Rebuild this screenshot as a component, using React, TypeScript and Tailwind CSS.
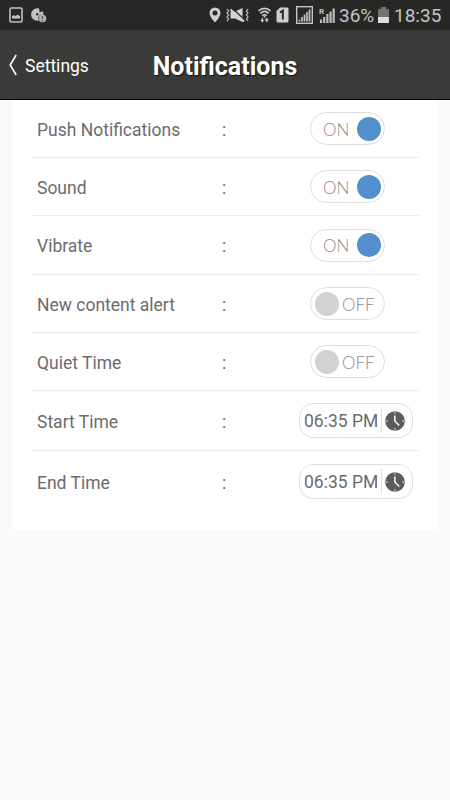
import React, { useState } from 'react';

// Status bar icons
const PictureIcon = () => (
  <svg className="w-[14px] h-[16px]" viewBox="0 0 14 16" fill="none">
    <rect x="1" y="1" width="12" height="14" rx="1.2" stroke="#bdbdbd" strokeWidth="1.6" />
    <path d="M3 11.500V9.300l2-1.300 1.500 1.200L8.800 7.400 11 9.300v2.200z" fill="#c4c4c4" />
  </svg>
);

const DiscIcon = () => (
  <svg className="w-[16px] h-[15px]" viewBox="0 0 16 15">
    <path d="M6.200.3a6.200 6.200 0 1 0 .1 12.400c.6 0 1-.1 1.500-.2A4 4 0 0 1 9.600 6.700h2.900A6.200 6.200 0 0 0 11.500 3.200L8.600 4.600 8.100.5z" fill="#c4c4c4" />
    <circle cx="6.200" cy="6.200" r="1.200" fill="#272826" />
    <circle cx="11.500" cy="10.500" r="3.800" fill="#b2b2b1" />
    <path d="M11.500 8v3M11.500 12v1" stroke="#555" strokeWidth="1.200" />
  </svg>
);

const PinIcon = () => (
  <svg className="w-[12px] h-[16px]" viewBox="0 0 12 16">
    <path
      d="M6 .5A5.500 5.500 0 0 0 .5 6c0 3.800 5.500 9.500 5.500 9.500S11.500 9.800 11.500 6A5.500 5.500 0 0 0 6 .5zm0 3a2.500 2.500 0 1 1 0 5 2.500 2.500 0 0 1 0-5z"
      fill="#cfcfcf"
    />
  </svg>
);

const VibrateMuteIcon = () => (
  <svg className="w-[23px] h-[16px]" viewBox="0 0 23 16" fill="none">
    <path
      d="M1 2l1.600 2L1 6l1.600 2L1 10l1.600 2L1 14M22 2l-1.600 2L22 6l-1.600 2 1.600 2-1.600 2 1.600 2"
      stroke="#c4c4c4"
      strokeWidth="1.200"
    />
    <path d="M4.500 4.500h4.500L16.500 1v14L9 11.500H4.500z" fill="#d4d4d4" />
    <path d="M7 2l12 11" stroke="#272826" strokeWidth="1.200" />
    <path d="M4.500 2.500l13.500 12" stroke="#d4d4d4" strokeWidth="1.800" />
  </svg>
);

const WifiIcon = () => (
  <svg className="w-[13px] h-[16px]" viewBox="0 0 13 16" fill="none" stroke="#cfcfcf">
    <path d="M.5 3.800c3.500-3.300 8.500-3.300 12 0M2.300 6.300c2.500-2.300 5.900-2.300 8.400 0M4.200 8.700c1.400-1.200 3.200-1.200 4.600 0" strokeWidth="1.600" />
    <path d="M6.500 8.800v1.700" strokeWidth="1.800" />
    <path d="M4.300 11v2M8.700 13v2" strokeWidth="1.400" />
    <path d="M2.200 13h4.200l-2.100 2.500zM6.600 13.300h4.200l-2.100-2.500z" fill="#cfcfcf" stroke="none" />
  </svg>
);

const SimIcon = () => (
  <svg className="w-[13px] h-[16px]" viewBox="0 0 13 16">
    <path d="M4 .5h7a1.500 1.500 0 0 1 1.500 1.500v12a1.500 1.500 0 0 1-1.500 1.500H2A1.500 1.500 0 0 1 .5 14V4z" fill="#cfcfcf" />
    <path d="M4 5.500l2.800-1.800v8.800" fill="none" stroke="#272826" strokeWidth="2" />
  </svg>
);

const SignalBoxIcon = () => (
  <svg className="w-[17px] h-[18px]" viewBox="0 0 17 18" fill="none" stroke="#c4c4c4">
    <rect x=".7" y=".7" width="15.600" height="16.600" strokeWidth="1.400" />
    <path d="M3.500 15.500v-2M6 15.500v-4.500M8.500 15.500V8.500M11 15.500V6M13.500 15.500V3.500" strokeWidth="1.700" />
  </svg>
);

const RoamingIcon = () => (
  <svg className="w-[16px] h-[17px]" viewBox="0 0 16 17">
    <text x="0" y="6.500" fontSize="8" fontFamily="Roboto, sans-serif" fontWeight="700" fill="#c4c4c4">R</text>
    <path d="M2 16v-3.500M5.200 16v-6M8.400 16V7M11.600 16V4.500M14.700 16V1.500" stroke="#bdbdbd" strokeWidth="2.200" />
  </svg>
);

const BatteryIcon = () => (
  <svg className="w-[11px] h-[16px]" viewBox="0 0 11 16">
    <path d="M3 0h5v2h3v8H0V2h3z" fill="#737372" />
    <path d="M0 10h11v6H0z" fill="#dedede" />
  </svg>
);

const ClockIcon = () => (
  <svg className="w-5 h-5" viewBox="0 0 20 20" fill="none">
    <circle cx="10" cy="10" r="9.800" fill="#5b5b5b" />
    <path d="M9.800 4.500V10l4.500 4.500" stroke="#f2f2f2" strokeWidth="1.600" />
    <path d="M10 1.200v1.500M10 17.300v1.500M1.200 10h1.500M17.300 10h1.500" stroke="#d5d5d5" strokeWidth="1.400" />
  </svg>
);

const StatusBar = () => (
  <div className="flex h-[30px] items-center bg-[#272826] pl-[9px] pr-[9px] text-[#c4c4c4]">
    <PictureIcon />
    <div className="ml-2"><DiscIcon /></div>
    <div className="ml-auto flex items-center">
      <PinIcon />
      <div className="ml-[5px]"><VibrateMuteIcon /></div>
      <div className="ml-[9px]"><WifiIcon /></div>
      <div className="ml-[5px]"><SimIcon /></div>
      <div className="ml-[7px]"><SignalBoxIcon /></div>
      <div className="ml-[6px]"><RoamingIcon /></div>
      <span className="ml-[4px] w-[36px] whitespace-nowrap pt-px text-[19px] leading-[29px]">36%</span>
      <div className="ml-[3px]"><BatteryIcon /></div>
      <span className="ml-[5px] w-[47px] whitespace-nowrap pt-px text-[19px] leading-[29px]">18:35</span>
    </div>
  </div>
);

const Header = () => (
  <header className="grid h-[70px] grid-cols-[1fr_auto_1fr] items-center border-b border-black bg-[#3a3b38] text-white">
    <button className="flex items-center pl-[9px] text-[17.5px] leading-6">
      <svg className="mr-[8px] h-[22px] w-[8px]" viewBox="0 0 8 22" fill="none">
        <path d="M7.200 1L1.200 11l6 10" stroke="#fff" strokeWidth="1.600" />
      </svg>
      <span className="pt-[2px]">Settings</span>
    </button>
    <h1 className="pt-[4px] text-[25px] font-bold leading-8 [text-shadow:1px_1px_1px_#111]">Notifications</h1>
  </header>
);

const Toggle = ({ on, onChange }: { on: boolean; onChange: () => void }) => (
  <button
    role="switch"
    aria-checked={on}
    onClick={onChange}
    className={`ml-[11px] flex h-[33px] w-[75px] items-center rounded-full border border-[#dedede] bg-white font-[Lato,sans-serif] text-[17px] font-light text-[#8c8c8c] ${
      on ? 'pl-[12px] pr-[3px] justify-between' : 'pl-[4px] gap-[3px]'
    }`}
  >
    {on && <span className="pt-px">ON</span>}
    <span className={`h-6 w-6 rounded-full ${on ? 'bg-[#528fcc]' : 'bg-[#d2d2d2]'}`} />
    {!on && <span className="pt-px">OFF</span>}
  </button>
);

const TimeField = ({ value }: { value: string }) => (
  <button className="flex h-[35px] w-[114px] items-center whitespace-nowrap rounded-[14px] border border-[#dedede] pl-[4px]">
    <span className="w-[77px] pt-[2px] text-left text-[17.5px] leading-[27px]">{value}</span>
    <span className="mr-[3px] h-[25px] w-px bg-[#dedede]" />
    <ClockIcon />
  </button>
);

const Row = ({ label, className = 'h-[58px]', children }: any) => (
  <div className={`grid grid-cols-[185px_82px_1fr] items-center border-b border-[#ececec] pl-[5px] ${className}`}>
    <span className="pt-[3px]">{label}</span>
    <span className="pt-[3px]">:</span>
    <div className="-ml-[5px]">{children}</div>
  </div>
);

export default function App() {
  const [settings, setSettings] = useState([
    { label: 'Push Notifications', on: true },
    { label: 'Sound', on: true },
    { label: 'Vibrate', on: true, rowClass: 'h-[59px]' },
    { label: 'New content alert', on: false },
    { label: 'Quiet Time', on: false },
  ]);

  const toggle = (index: number) =>
    setSettings(settings.map((s, i) => (i === index ? { ...s, on: !s.on } : s)));

  return (
    <div className="min-h-screen bg-[#fafafa] font-[Roboto,sans-serif]">
      <StatusBar />
      <Header />
      <main className="ml-3 mr-[12px] h-[430px] bg-white pl-5 pr-[19px] text-[17.5px] leading-[27px] text-[#6c6c6c]">
        {settings.map((s, i) => (
          <Row key={s.label} label={s.label} className={s.rowClass}>
            <Toggle on={s.on} onChange={() => toggle(i)} />
          </Row>
        ))}
        <Row label="Start Time" className="h-[60px]">
          <TimeField value="06:35 PM" />
        </Row>
        <Row label="End Time" className="h-[61px] border-b-0">
          <TimeField value="06:35 PM" />
        </Row>
      </main>
    </div>
  );
}
